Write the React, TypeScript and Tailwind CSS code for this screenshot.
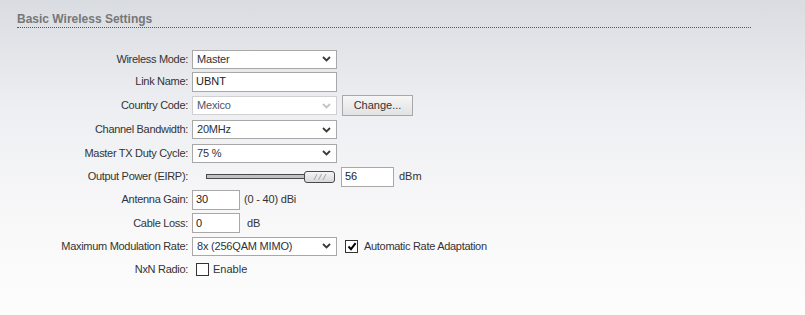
import React from "react"

const font = { fontFamily: '"Liberation Sans", Arial, sans-serif' }

const Chevron = ({ disabled }: { disabled?: boolean }) => (
  <svg width="9" height="6" viewBox="0 0 9 6" className="absolute right-[5px] top-1/2 -translate-y-1/2">
    <polyline points="1,1 4.5,4.5 8,1" fill="none" stroke={disabled ? "#c4c4c4" : "#3a3a3a"} strokeWidth="1.8" />
  </svg>
)

const Select = ({ value, disabled, w = "w-[145px]" }: { value: string; disabled?: boolean; w?: string }) => (
  <div
    className={`relative ${w} h-[19px] bg-white border flex items-center pl-[4px] text-[11px] tracking-[-0.2px] ${
      disabled ? "border-[#d0d0d0] text-[#4e5566]" : "border-[#a8a8a8] text-[#2b3240]"
    }`}
  >
    {value}
    <Chevron disabled={disabled} />
  </div>
)

const Input = ({ value, w }: { value: string; w: string }) => (
  <div className={`${w} h-[20px] bg-white border border-[#a8a8a8] flex items-center pl-[3px] text-[11px] text-[#222]`}>{value}</div>
)

const Checkbox = ({ checked }: { checked?: boolean }) => (
  <div className="w-[13px] h-[13px] bg-white border border-[#333] flex items-center justify-center">
    {checked && (
      <svg width="10" height="9" viewBox="0 0 10 9">
        <polyline points="1.5,4.5 4,7.2 8.6,1.2" fill="none" stroke="#000" strokeWidth="2" />
      </svg>
    )}
  </div>
)

const Slider = () => (
  <div className="relative ml-[14px] w-[130px] h-[14px] flex items-center">
    <div className="w-[110px] h-[5px] bg-[#c2c2c2] border border-[#4a4a4a]" />
    <div className="absolute right-[1px] top-[1px] w-[31px] h-[12px] rounded-[3px] border border-[#4a4a4a] bg-gradient-to-b from-[#f4f4f4] to-[#d9d9d9] flex items-center justify-center">
      <svg width="14" height="6" viewBox="0 0 14 6">
        <g stroke="#a6a6a6" strokeWidth="1">
          <line x1="1" y1="6" x2="4" y2="0" />
          <line x1="5.5" y1="6" x2="8.5" y2="0" />
          <line x1="10" y1="6" x2="13" y2="0" />
        </g>
      </svg>
    </div>
  </div>
)

const Row = ({ label, h, children }: { label: string; h: string; children: React.ReactNode }) => (
  <div className={`flex items-center ${h}`}>
    <div className="w-[188px] text-right text-[11px] tracking-[-0.3px] text-[#333]">{label}</div>
    <div className="ml-[4px] flex items-center">{children}</div>
  </div>
)

export default function App() {
  return (
    <div
      style={font}
      className="w-[805px] h-[315px] overflow-hidden bg-[linear-gradient(to_bottom,#d9dce1,#eeeff2_35%,#f8f8f9_70%,#fdfdfd)]"
    >
      <div className="ml-[17px] mt-[11px] w-[734px] border-b border-dotted border-[#555]">
        <h2 className="text-[12px] leading-[16px] font-bold text-[#777]">Basic Wireless Settings</h2>
      </div>
      <div className="mt-[20px] flex flex-col">
        <Row label="Wireless Mode:" h="h-[22px]">
          <Select value="Master" />
        </Row>
        <Row label="Link Name:" h="h-[23px]">
          <Input value="UBNT" w="w-[145px]" />
        </Row>
        <Row label="Country Code:" h="h-[25px]">
          <Select value="Mexico" disabled />
          <button className="ml-[5px] w-[71px] h-[21px] border border-[#a8a8a8] bg-gradient-to-b from-[#f6f6f6] to-[#e2e2e2] text-[11px] text-[#333]">
            Change...
          </button>
        </Row>
        <Row label="Channel Bandwidth:" h="h-[23px]">
          <Select value="20MHz" />
        </Row>
        <Row label="Master TX Duty Cycle:" h="h-[24px]">
          <Select value="75 %" />
        </Row>
        <Row label="Output Power (EIRP):" h="h-[23px]">
          <Slider />
          <div className="ml-[5px]">
            <Input value="56" w="w-[53px]" />
          </div>
          <span className="ml-[5px] text-[11px] text-[#333]">dBm</span>
        </Row>
        <Row label="Antenna Gain:" h="h-[23px]">
          <Input value="30" w="w-[48px]" />
          <span className="ml-[4px] text-[11px] tracking-[-0.2px] text-[#333]">(0 - 40) dBi</span>
        </Row>
        <Row label="Cable Loss:" h="h-[24px]">
          <Input value="0" w="w-[48px]" />
          <span className="ml-[7px] text-[11px] text-[#333]">dB</span>
        </Row>
        <Row label="Maximum Modulation Rate:" h="h-[22px]">
          <Select value="8x (256QAM MIMO)" />
          <div className="ml-[8px]">
            <Checkbox checked />
          </div>
          <span className="ml-[6px] text-[11px] tracking-[-0.3px] text-[#333]">Automatic Rate Adaptation</span>
        </Row>
        <Row label="NxN Radio:" h="h-[24px]">
          <div className="ml-[4px]">
            <Checkbox />
          </div>
          <span className="ml-[4px] text-[11px] text-[#333]">Enable</span>
        </Row>
      </div>
    </div>
  )
}
